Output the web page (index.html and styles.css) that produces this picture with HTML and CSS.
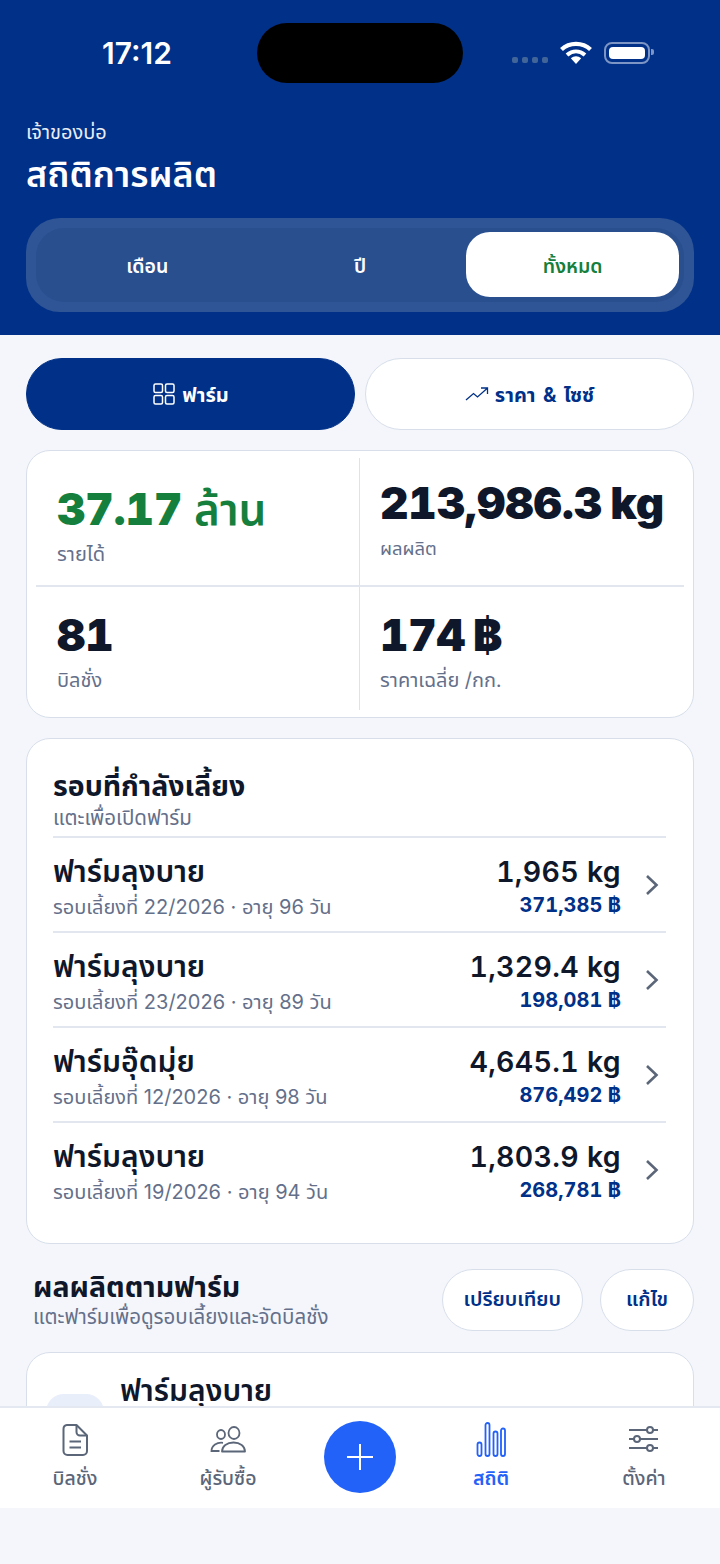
FILE: index.html
```html
<!DOCTYPE html>
<html lang="th">
<head>
    <meta charset="UTF-8">
    <meta name="viewport" content="width=device-width, initial-scale=1.0">
    <title>สถิติการผลิต</title>
    <link rel="stylesheet" href="styles.css">
</head>
<body>
    <div class="island"></div>
    <header class="top">
        <div class="status">
            <span class="time">17:12</span>
            <div class="status-icons">
                <span class="dots"><i></i><i></i><i></i><i></i></span>
                <svg class="wifi" width="32" height="24" viewBox="0 0 32 24">
                    <path d="M1.5 8.5C9.5 1 22.500 1 30.500 8.500" fill="none" stroke="#fff" stroke-width="4.200"/>
                    <path d="M7 14C12.500 9.200 19.500 9.200 25 14" fill="none" stroke="#fff" stroke-width="4"/>
                    <path d="M10.800 17.300C14 14.600 18 14.600 21.200 17.300L16 23Z" fill="#fff"/>
                </svg>
                <span class="battery"><b></b></span>
            </div>
        </div>
        <div class="owner">เจ้าของบ่อ</div>
        <h1>สถิติการผลิต</h1>
        <div class="segment">
            <div class="segment-inner">
                <button class="seg">เดือน</button>
                <button class="seg">ปี</button>
                <button class="seg seg-active">ทั้งหมด</button>
            </div>
        </div>
    </header>

    <main class="content">
        <div class="tabs">
            <button class="tab tab-active">
                <svg width="24" height="24" viewBox="0 0 24 24" fill="none" stroke="#fff" stroke-width="1.500">
                    <rect x="2" y="2" width="8.500" height="8.500" rx="1.500"/>
                    <rect x="13.500" y="2" width="8.500" height="8.500" rx="1.500"/>
                    <rect x="2" y="13.500" width="8.500" height="8.500" rx="1.500"/>
                    <rect x="13.500" y="13.500" width="8.500" height="8.500" rx="1.500"/>
                </svg>
                <span>ฟาร์ม</span>
            </button>
            <button class="tab">
                <svg width="24" height="24" viewBox="0 0 24 24" fill="none" stroke="#003087" stroke-width="1.300">
                    <path d="M1 18L8.500 11.500L12.500 15L22 6.500M16 6H22.500V12"/>
                </svg>
                <span>ราคา &amp; ไซซ์</span>
            </button>
        </div>

        <section class="card stats">
            <div class="stat stat-a">
                <div class="stat-value green">37.17 <span class="unit">ล้าน</span></div>
                <div class="stat-label">รายได้</div>
            </div>
            <div class="stat stat-b">
                <div class="stat-value">213,986.3<span class="tight">kg</span></div>
                <div class="stat-label">ผลผลิต</div>
            </div>
            <div class="stat stat-c">
                <div class="stat-value">81</div>
                <div class="stat-label">บิลชั่ง</div>
            </div>
            <div class="stat stat-d">
                <div class="stat-value">174<span class="tight">฿</span></div>
                <div class="stat-label">ราคาเฉลี่ย /กก.</div>
            </div>
        </section>

        <section class="card rounds">
            <h2>รอบที่กำลังเลี้ยง</h2>
            <p class="hint">แตะเพื่อเปิดฟาร์ม</p>
            <div class="round">
                <div class="round-left">
                    <div class="round-name">ฟาร์มลุงบาย</div>
                    <div class="round-sub">รอบเลี้ยงที่ 22/2026 · อายุ 96 วัน</div>
                </div>
                <div class="round-right">
                    <div class="round-kg">1,965 kg</div>
                    <div class="round-baht">371,385 ฿</div>
                </div>
                <svg class="chev" width="16" height="24" viewBox="0 0 16 24"><path d="M3 3L12.500 12L3 21"/></svg>
            </div>
            <div class="round">
                <div class="round-left">
                    <div class="round-name">ฟาร์มลุงบาย</div>
                    <div class="round-sub">รอบเลี้ยงที่ 23/2026 · อายุ 89 วัน</div>
                </div>
                <div class="round-right">
                    <div class="round-kg">1,329.4 kg</div>
                    <div class="round-baht">198,081 ฿</div>
                </div>
                <svg class="chev" width="16" height="24" viewBox="0 0 16 24"><path d="M3 3L12.500 12L3 21"/></svg>
            </div>
            <div class="round">
                <div class="round-left">
                    <div class="round-name">ฟาร์มอุ๊ดมุ่ย</div>
                    <div class="round-sub">รอบเลี้ยงที่ 12/2026 · อายุ 98 วัน</div>
                </div>
                <div class="round-right">
                    <div class="round-kg">4,645.1 kg</div>
                    <div class="round-baht">876,492 ฿</div>
                </div>
                <svg class="chev" width="16" height="24" viewBox="0 0 16 24"><path d="M3 3L12.500 12L3 21"/></svg>
            </div>
            <div class="round">
                <div class="round-left">
                    <div class="round-name">ฟาร์มลุงบาย</div>
                    <div class="round-sub">รอบเลี้ยงที่ 19/2026 · อายุ 94 วัน</div>
                </div>
                <div class="round-right">
                    <div class="round-kg">1,803.9 kg</div>
                    <div class="round-baht">268,781 ฿</div>
                </div>
                <svg class="chev" width="16" height="24" viewBox="0 0 16 24"><path d="M3 3L12.500 12L3 21"/></svg>
            </div>
        </section>

        <div class="section-head">
            <div class="section-title">
                <h2>ผลผลิตตามฟาร์ม</h2>
                <p class="hint">แตะฟาร์มเพื่อดูรอบเลี้ยงและจัดบิลชั่ง</p>
            </div>
            <button class="pill">เปรียบเทียบ</button>
            <button class="pill pill-small">แก้ไข</button>
        </div>

        <section class="card farm">
            <div class="farm-icon"></div>
            <div class="farm-name">ฟาร์มลุงบาย</div>
        </section>
    </main>

    <nav class="nav">
        <a class="nav-item">
            <svg width="36" height="36" viewBox="0 0 36 36" fill="none" stroke="#5b6679" stroke-width="2">
                <path d="M10 3H19.500L30 13.500V29A4 4 0 0 1 26 33H10.500A4 4 0 0 1 6.500 29V7A4 4 0 0 1 10 3Z" stroke-linejoin="round"/>
                <path d="M19.500 3.500V10A3.500 3.500 0 0 0 23 13.500H30M12.500 19.500H24M12.500 25.500H24"/>
            </svg>
            <span>บิลชั่ง</span>
        </a>
        <a class="nav-item">
            <svg width="36" height="36" viewBox="0 0 36 36" fill="none" stroke="#5b6679" stroke-width="1.800">
                <ellipse cx="11" cy="12.500" rx="4" ry="4.500"/>
                <ellipse cx="24" cy="11" rx="5.500" ry="6"/>
                <path d="M12 29.500C12 24 17 20.500 23.500 20.500C30 20.500 35 24 35 29.500Z" stroke-linejoin="round"/>
                <path d="M13 20.800C7 20 1.500 23.500 1.500 29H9.500"/>
            </svg>
            <span>ผู้รับซื้อ</span>
        </a>
        <button class="fab">
            <svg width="28" height="28" viewBox="0 0 28 28" stroke="#fff" stroke-width="2"><path d="M14 1V27M1 14H27"/></svg>
        </button>
        <a class="nav-item nav-active">
            <svg width="36" height="36" viewBox="0 0 36 36" fill="none" stroke="#2362f8" stroke-width="1.800">
                <rect x="4.500" y="20.500" width="4" height="13.500" rx="2"/>
                <rect x="12.500" y="1" width="4" height="33" rx="2"/>
                <rect x="20.500" y="9.500" width="4" height="24.500" rx="2"/>
                <rect x="28" y="6.500" width="4" height="27.500" rx="2"/>
            </svg>
            <span>สถิติ</span>
        </a>
        <a class="nav-item">
            <svg width="36" height="36" viewBox="0 0 36 36" fill="none" stroke="#5b6679" stroke-width="2">
                <path d="M3 8H32M3 17H32M3 26H32"/>
                <circle cx="24" cy="8" r="3" fill="#fff"/>
                <circle cx="11" cy="17" r="3" fill="#fff"/>
                <circle cx="24" cy="26" r="3" fill="#fff"/>
            </svg>
            <span>ตั้งค่า</span>
        </a>
    </nav>
    <div class="safe-area"></div>
</body>
</html>
```

FILE: styles.css
```css
* {
    box-sizing: border-box;
}

html, body {
    margin: 0;
    height: 1564px;
}

body {
    font-family: Inter, "Noto Sans Thai", "Noto Sans", sans-serif;
    font-variant-numeric: tabular-nums;
    display: flex;
    flex-direction: column;
    overflow: hidden;
    background-color: #f4f6fb;
    color: #0f172a;
    position: relative;
}

button {
    font: inherit;
    border: 0;
    background: none;
    padding: 0;
}

h1, h2, p {
    margin: 0;
}

.island {
    position: absolute;
    left: 257px;
    top: 23px;
    width: 206px;
    height: 60px;
    border-radius: 30px;
    background-color: #000;
}

.top {
    flex: none;
    height: 335px;
    padding: 0 26px;
    background-color: #003087;
    color: #fff;
}

.status {
    height: 106px;
    display: flex;
    justify-content: space-between;
    align-items: flex-start;
    padding: 36px 44px 0 76px;
}

.time {
    font-size: 30px;
    line-height: 34px;
    font-weight: 600;
    font-variant-numeric: normal;
}

.status-icons {
    display: flex;
    align-items: center;
    gap: 12px;
    height: 34px;
}

.dots {
    display: flex;
    gap: 4px;
    margin-top: 14px;
}

.dots i {
    width: 6px;
    height: 6px;
    border-radius: 2px;
    background-color: #426599;
}

.battery {
    position: relative;
    width: 46px;
    height: 22px;
    padding: 3px;
    border: 2px solid #7c95c4;
    border-radius: 8px;
    display: block;
}

.battery::after {
    content: "";
    position: absolute;
    right: -6px;
    top: 5px;
    width: 3px;
    height: 6px;
    border-radius: 0 2px 2px 0;
    background-color: #7c95c4;
}

.battery b {
    display: block;
    height: 100%;
    background-color: #fff;
    border-radius: 4px;
}

.owner {
    font-size: 20px;
    line-height: 26px;
    color: #e8edf6;
    margin-top: 13px;
}

h1 {
    font-size: 36px;
    line-height: 44px;
    font-weight: 600;
    margin-top: 7px;
}

.segment {
    margin-top: 22px;
    height: 94px;
    padding: 10px;
    border-radius: 34px;
    background-color: #2f5596;
}

.segment-inner {
    height: 100%;
    padding: 0 5px;
    border-radius: 28px;
    background-color: #2a4f8f;
    display: grid;
    grid-template-columns: repeat(3, 1fr);
}

.seg {
    color: #fff;
    font-size: 19.500px;
    font-weight: 600;
    height: 65px;
    margin-top: 4px;
    padding-top: 4px;
    border-radius: 24px;
}

.seg-active {
    background-color: #fff;
    color: #15803d;
}

.content {
    flex: 1;
    overflow: hidden;
    padding: 23px 26px 0;
}

.tabs {
    display: flex;
    gap: 10px;
}

.tab {
    flex: 1;
    height: 72px;
    border-radius: 36px;
    border: 1px solid #d8dfea;
    background-color: #fff;
    color: #003087;
    font-size: 20px;
    font-weight: 700;
    word-spacing: 2px;
    display: flex;
    align-items: center;
    justify-content: center;
    gap: 6px;
}

.tab span {
    margin-top: 4px;
}

.tab-active {
    background-color: #003087;
    border-color: #003087;
    color: #fff;
}

.card {
    background-color: #fff;
    border: 1px solid #d8dfea;
    border-radius: 24px;
}

.stats {
    margin-top: 20px;
    height: 268px;
    padding: 7px 9px;
    display: grid;
    grid-template-columns: 324px 1fr;
    grid-template-rows: 129px 1fr;
}

.stat {
    padding: 24px 0 0 20px;
}

.stat-a, .stat-c {
    padding-left: 21px;
    border-right: 1px solid #dde3ed;
}

.stat-a, .stat-b {
    border-bottom: 2px solid #e2e7ef;
}

.stat-b {
    padding-top: 18px;
}

.stat-c, .stat-d {
    padding-top: 21px;
}

.stat-value {
    font-size: 44px;
    line-height: 54px;
    font-weight: 900;
    white-space: nowrap;
}

.tight {
    margin-left: 8px;
}

.green {
    color: #15803d;
}

.unit {
    font-weight: 600;
}

.stat-label {
    font-size: 20px;
    line-height: 26px;
    margin-top: 5px;
    color: #64708a;
}

.stat-b .stat-label {
    font-size: 18.500px;
}

.rounds {
    margin-top: 20px;
    height: 506px;
    padding: 29px 27px 0 26px;
}

h2 {
    font-size: 28.500px;
    line-height: 32px;
    font-weight: 700;
}

.rounds h2 {
    line-height: 36px;
}

.hint {
    font-size: 20.500px;
    line-height: 24px;
    margin-top: 2px;
    color: #64708a;
}

.round {
    height: 95px;
    border-top: 2px solid #e2e7ef;
    display: flex;
    align-items: center;
}

.hint + .round {
    margin-top: 6px;
}

.round-left {
    flex: 1;
    margin-top: 4px;
}

.round-name {
    font-size: 30px;
    line-height: 38px;
    font-weight: 600;
}

.round-sub {
    font-size: 20px;
    line-height: 29px;
    margin-top: 3px;
    color: #64708a;
    font-variant-numeric: normal;
}

.round-right {
    text-align: right;
    margin-top: 3px;
}

.round-kg {
    font-size: 28.500px;
    line-height: 38px;
    font-weight: 600;
    letter-spacing: 0.300px;
}

.round-baht {
    font-size: 20px;
    line-height: 28px;
    font-weight: 700;
    color: #003087;
}

.chev {
    margin: 0 6px 0 23px;
    fill: none;
    stroke: #5b6679;
    stroke-width: 2.600;
}

.section-head {
    margin-top: 25px;
    padding-left: 7px;
    height: 62px;
    display: flex;
    align-items: center;
    gap: 17px;
}

.section-title {
    flex: 1;
}

.pill {
    height: 62px;
    padding: 0 21px;
    border-radius: 31px;
    border: 1px solid #d8dfea;
    background-color: #fff;
    color: #003087;
    font-size: 20px;
    font-weight: 600;
}

.pill-small {
    min-width: 94px;
}

.farm {
    margin-top: 21px;
    height: 200px;
    padding: 22px 19px;
    display: flex;
    gap: 16px;
    align-items: flex-start;
}

.farm-icon {
    width: 58px;
    height: 58px;
    margin-top: 19px;
    border-radius: 18px;
    background-color: #e9eefb;
}

.farm-name {
    font-size: 30px;
    line-height: 30px;
    font-weight: 600;
}

.nav {
    flex: none;
    height: 102px;
    border-top: 2px solid #e3e8f1;
    background-color: #fff;
    display: grid;
    grid-template-columns: 150px 156px 108px 154px 152px;
    align-items: center;
    justify-items: center;
}

.nav-item {
    display: flex;
    flex-direction: column;
    align-items: center;
    align-self: start;
    padding-top: 14px;
    color: #5b6679;
    font-size: 19.500px;
    line-height: 28px;
    font-weight: 500;
}

.nav-item span {
    margin-top: 6px;
}

.nav-active {
    color: #2362f8;
    font-weight: 600;
}

.fab {
    width: 72px;
    height: 72px;
    margin-top: -3px;
    border-radius: 50%;
    background-color: #2362f8;
    display: flex;
    align-items: center;
    justify-content: center;
}

.safe-area {
    flex: none;
    height: 56px;
}
```
